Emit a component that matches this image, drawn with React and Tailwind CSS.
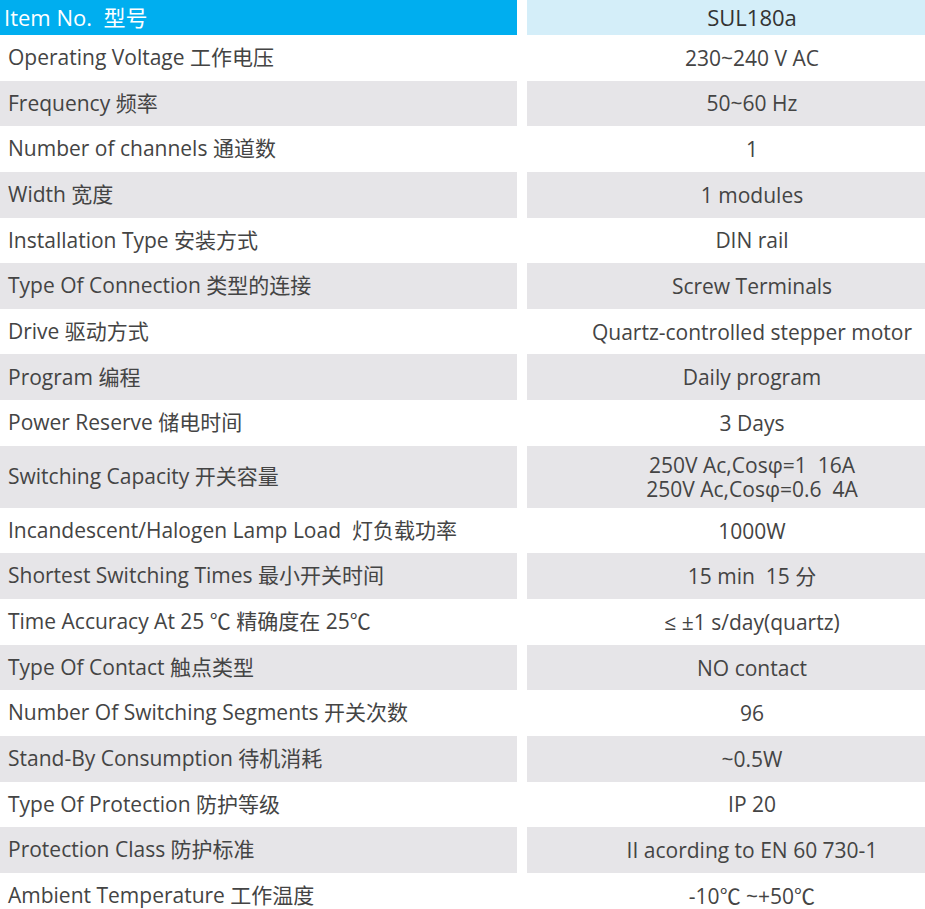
const ROWS = [
  ['Operating Voltage 工作电压', ['230~240 V AC']],
  ['Frequency 频率', ['50~60 Hz']],
  ['Number of channels 通道数', ['1']],
  ['Width 宽度', ['1 modules']],
  ['Installation Type 安装方式', ['DIN rail']],
  ['Type Of Connection 类型的连接', ['Screw Terminals']],
  ['Drive 驱动方式', ['Quartz-controlled stepper motor']],
  ['Program 编程', ['Daily program']],
  ['Power Reserve 储电时间', ['3 Days']],
  ['Switching Capacity 开关容量', ['250V Ac,Cosφ=1  16A', '250V Ac,Cosφ=0.6  4A']],
  ['Incandescent/Halogen Lamp Load  灯负载功率', ['1000W']],
  ['Shortest Switching Times 最小开关时间', ['15 min  15 分']],
  ['Time Accuracy At 25 ℃ 精确度在 25℃', ['≤ ±1 s/day(quartz)']],
  ['Type Of Contact 触点类型', ['NO contact']],
  ['Number Of Switching Segments 开关次数', ['96']],
  ['Stand-By Consumption 待机消耗', ['~0.5W']],
  ['Type Of Protection 防护等级', ['IP 20']],
  ['Protection Class 防护标准', ['II acording to EN 60 730-1']],
  ['Ambient Temperature 工作温度', ['-10℃ ~+50℃']],
];

export default function App() {
  return (
    <div
      className="w-[925px] h-[909px] overflow-hidden bg-white text-[21px] text-[#444] whitespace-pre"
      style={{ fontFamily: '"Open Sans", "Noto Sans CJK SC", sans-serif' }}
    >
      <div className="flex h-[35px] gap-[10px]">
        <div className="w-[517px] shrink-0 bg-[#00aeef] text-white text-[22px] flex items-center pl-[4px]">
          Item No.  型号
        </div>
        <div className="w-[450px] shrink-0 bg-[#d4eef9] text-[#333] text-[22px] flex items-center justify-center">
          SUL180a
        </div>
      </div>
      {ROWS.map(([label, value], i) => {
        const gray = i % 2 === 1;
        const tall = value.length > 1;
        return (
          <div key={i} className={`flex gap-[10px] ${tall ? 'h-[62px]' : 'h-[45.65px]'}`}>
            <div className={`w-[517px] shrink-0 flex items-center pl-[8px] ${gray ? 'bg-[#e6e5e8]' : ''}`}>{label}</div>
            <div
              className={`w-[450px] shrink-0 flex flex-col items-center justify-center leading-[24px] ${gray ? 'bg-[#e6e5e8]' : ''}`}
            >
              {value.map((v) => (
                <div key={v}>{v}</div>
              ))}
            </div>
          </div>
        );
      })}
    </div>
  );
}
